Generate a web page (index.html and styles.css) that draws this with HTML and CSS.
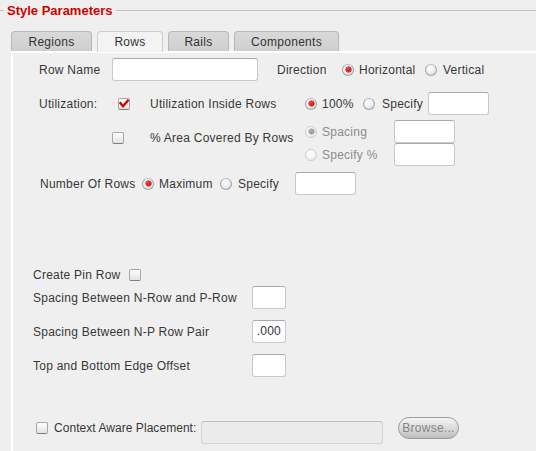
FILE: index.html
```html
<!DOCTYPE html>
<html>
<head>
<meta charset="utf-8">
<link rel="stylesheet" href="styles.css">
</head>
<body>
<div class="legend">
  <span class="legend-line short"></span>
  <span class="legend-title">Style Parameters</span>
  <span class="legend-line grow"></span>
</div>

<div class="tabs">
  <div class="tab t-regions">Regions</div>
  <div class="tab t-rows active">Rows</div>
  <div class="tab t-rails">Rails</div>
  <div class="tab t-comp">Components</div>
</div>

<div class="panel">
  <div class="row r-name">
    <span class="txt w-rowname">Row Name</span>
    <span class="field w-146"></span>
    <span class="txt dir">Direction</span>
    <span class="radio on"></span><span class="txt rt w-horiz">Horizontal</span>
    <span class="radio"></span><span class="txt rt6">Vertical</span>
  </div>

  <div class="row r-util">
    <span class="txt w-util">Utilization:</span>
    <span class="check on"><svg viewBox="0 0 12 12" width="12" height="12"><path d="M2.5 5.2 L5 8.2 L9.8 2.6" fill="none" stroke="#d40000" stroke-width="2.4" stroke-linecap="square"/></svg></span>
    <span class="txt w-utilin">Utilization Inside Rows</span>
    <span class="radio on"></span><span class="txt rt w-100">100%</span>
    <span class="radio"></span><span class="txt rt7 w-spec">Specify</span>
    <span class="field w-61"></span>
  </div>

  <div class="row r-area">
    <span class="check area-check"></span>
    <span class="txt area-text">% Area Covered By Rows</span>
    <div class="area-col">
      <div class="sub">
        <span class="radio dis-on"></span><span class="txt rt dis w-spc">Spacing</span>
        <span class="field w-61"></span>
      </div>
      <div class="sub">
        <span class="radio dis"></span><span class="txt rt dis w-spc">Specify %</span>
        <span class="field w-61"></span>
      </div>
    </div>
  </div>

  <div class="row r-num">
    <span class="txt w-num">Number Of Rows</span>
    <span class="radio on"></span><span class="txt rt w-max">Maximum</span>
    <span class="radio"></span><span class="txt rt6 w-spec2">Specify</span>
    <span class="field w-61"></span>
  </div>

  <div class="row r-pin">
    <span class="txt w-pin">Create Pin Row</span>
    <span class="check"></span>
  </div>

  <div class="row r-sp first">
    <span class="txt w-sp">Spacing Between N-Row and P-Row</span>
    <span class="field w-34"></span>
  </div>
  <div class="row r-sp">
    <span class="txt w-sp">Spacing Between N-P Row Pair</span>
    <span class="field w-34 val">.000</span>
  </div>
  <div class="row r-sp">
    <span class="txt w-sp">Top and Bottom Edge Offset</span>
    <span class="field w-34"></span>
  </div>

  <div class="row r-ctx">
    <span class="check ctx-check"></span>
    <span class="txt ctx-text">Context Aware Placement:</span>
    <span class="field ctx-field"></span>
    <span class="browse">Browse...</span>
  </div>
</div>
</body>
</html>
```

FILE: styles.css
```css
* { box-sizing: border-box; }

html, body {
  margin: 0;
  padding: 0;
  background: #efefef;
  height: 100%;
  overflow: hidden;
}

body {
  font-family: "Liberation Sans", Arial, sans-serif;
  font-size: 12px;
  letter-spacing: 0.25px;
  color: #383838;
}

/* legend */
.legend {
  display: flex;
  align-items: center;
  height: 20px;
  padding-top: 1px;
}
.legend-line {
  height: 1px;
  background: #c2c2c2;
}
.legend-line.short { width: 4px; }
.legend-line.grow { flex: 1; margin-left: 3px; }
.legend-title {
  font-weight: bold;
  font-size: 13px;
  letter-spacing: 0;
  color: #d00000;
  margin-left: 3px;
  line-height: 16px;
}

/* tabs */
.tabs {
  display: flex;
  padding-left: 11px;
  margin-top: 11px;
  height: 20px;
  gap: 5px;
}
.tab {
  height: 20px;
  border: 1px solid #b8b8b8;
  border-bottom: none;
  border-radius: 4px 4px 0 0;
  background: linear-gradient(#d9d9d9, #cfcfcf);
  text-align: center;
  line-height: 21px;
  color: #333;
  letter-spacing: 0.3px;
}
.tab.active {
  background: #f3f3f3;
  border-color: #cdcdcd;
  height: 21px;
}
.t-regions { width: 81px; }
.t-rows { width: 66px; }
.t-rails { width: 61px; }
.t-comp { width: 105px; }

/* panel */
.panel {
  margin-left: 11px;
  border-left: 2px solid #fff;
  border-top: 2px solid #fff;
  height: calc(100% - 51px);
}

.row {
  display: flex;
  align-items: center;
}

.txt {
  display: inline-block;
  white-space: nowrap;
  line-height: 14px;
}
.txt.dis { color: #8c8c8c; }
.rt { margin-left: 5px; }
.rt6 { margin-left: 6px; }
.rt7 { margin-left: 7px; }

.field {
  display: inline-block;
  height: 23px;
  background: #fff;
  border: 1px solid #c9c9c9;
  border-top-color: #a9a9a9;
  border-radius: 3px;
  flex: none;
}
.w-146 { width: 146px; }
.w-61 { width: 61px; }
.w-34 { width: 34px; }

.field.val {
  text-align: right;
  padding-right: 4px;
  line-height: 21px;
  color: #333;
  overflow: hidden;
}

/* radio */
.radio {
  display: inline-block;
  width: 12px;
  height: 12px;
  border-radius: 50%;
  border: 1px solid #a4a4a4;
  border-top-color: #b8b8b8;
  background: radial-gradient(circle at 40% 35%, #ffffff 0%, #f2f2f2 40%, #cfcfcf 100%);
  position: relative;
  flex: none;
}
.radio.on::after,
.radio.dis-on::after {
  content: "";
  position: absolute;
  left: 2.5px;
  top: 2.5px;
  width: 5px;
  height: 5px;
  border-radius: 50%;
  background: radial-gradient(circle at 40% 35%, #ff3a3a, #c80000);
  box-shadow: 0 0 0 0.5px #7a0000;
}
.radio.dis-on::after {
  background: radial-gradient(circle at 40% 35%, #b0b0b0, #8a8a8a);
  box-shadow: 0 0 0 0.5px #888;
}
.radio.dis, .radio.dis-on {
  border-color: #cfcfcf;
  background: radial-gradient(circle at 40% 35%, #ffffff 0%, #f4f4f4 50%, #dedede 100%);
}

/* checkbox */
.check {
  display: inline-block;
  width: 12px;
  height: 12px;
  border: 1px solid #a8a8a8;
  border-bottom-color: #7e7e7e;
  border-radius: 2px;
  background: linear-gradient(#ffffff, #e2e2e2);
  flex: none;
  position: relative;
}
.check svg {
  position: absolute;
  left: -1px;
  top: -1px;
}

/* row 1 */
.r-name { margin-top: 5px; height: 23px; padding-left: 26px; }
.w-rowname { width: 73px; }
.dir { margin-left: 19px; width: 65px; }
.w-horiz { width: 66px; }

/* row 2 */
.r-util { margin-top: 11px; height: 23px; padding-left: 26px; }
.w-util { width: 79px; }
.r-util .check { margin-right: 20px; }
.w-utilin { width: 155px; }
.w-100 { width: 41px; }
.w-spec { width: 46px; }

/* row 3 */
.r-area { margin-top: 5px; padding-left: 99px; align-items: flex-start; }
.area-check { margin-top: 12px; margin-right: 26px; }
.area-text { margin-top: 11px; width: 155px; }
.area-col { display: flex; flex-direction: column; }
.sub { display: flex; align-items: center; height: 23px; }
.w-spc { width: 72px; }

/* row 4 */
.r-num { margin-top: 6px; height: 23px; padding-left: 27px; }
.w-num { width: 102px; }
.w-max { width: 61px; }
.w-spec2 { width: 57px; }

/* lower section */
.r-pin { margin-top: 73px; height: 14px; padding-left: 20px; }
.w-pin { width: 96px; }

.r-sp { margin-top: 11px; height: 23px; padding-left: 20px; }
.r-sp.first { margin-top: 4px; }
.w-sp { width: 219px; }

.r-ctx { margin-top: 40px; padding-left: 23px; align-items: flex-start; }
.ctx-check { margin-top: 5px; margin-right: 6px; }
.ctx-text { margin-top: 4px; width: 147px; letter-spacing: 0.05px; }
.ctx-field {
  margin-top: 4px;
  width: 182px;
  background: #ebebeb;
  border-color: #d2d2d2;
  border-top-color: #c0c0c0;
}
.browse {
  margin-left: 15px;
  width: 61px;
  height: 22px;
  border-radius: 11px;
  border: 1px solid #9c9c9c;
  background: linear-gradient(#f4f4f4 0%, #dcdcdc 50%, #bdbdbd 100%);
  color: #858585;
  text-align: center;
  line-height: 20px;
  flex: none;
}
```
